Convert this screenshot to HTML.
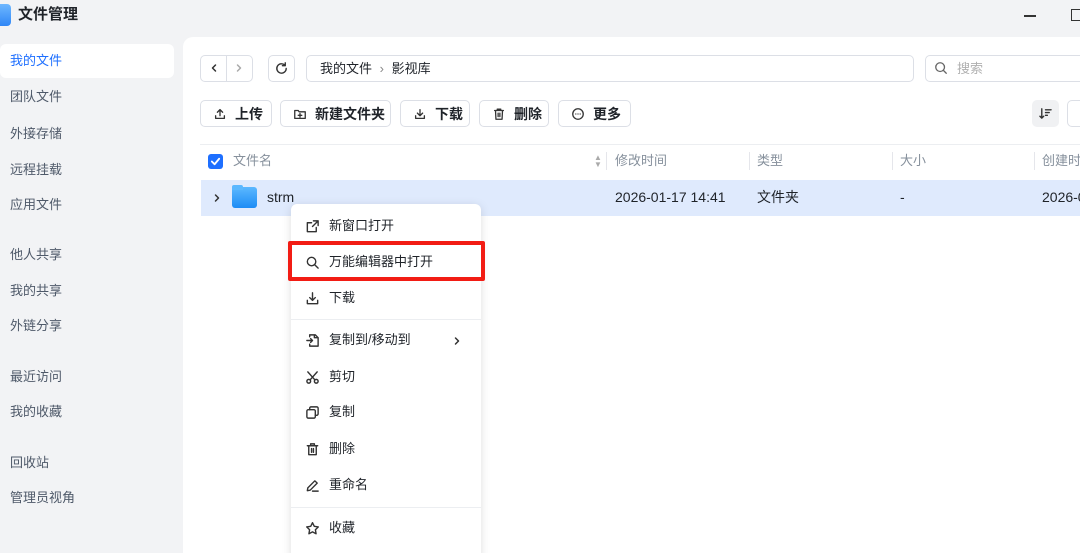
<!DOCTYPE html>
<html><head><meta charset="utf-8"><style>
*{box-sizing:border-box;margin:0;padding:0}
html,body{width:1080px;height:553px;overflow:hidden}
body{background:#f2f3f5;font-family:"Liberation Sans","Noto Sans CJK SC",sans-serif;color:#1f2329;position:relative;white-space:nowrap}
.abs{position:absolute}
.nav{position:absolute;left:10px;font-size:13px;color:#4e5969;line-height:16px}
.btn{position:absolute;height:27px;border:1px solid #dcdfe6;border-radius:5px;background:#fff;font-size:14px;font-weight:bold;display:flex;align-items:center;padding-left:12px;gap:8px;color:#1f2329}
.btn svg{width:14px;height:14px}
.mi{position:absolute;left:305px;font-size:13px;display:flex;align-items:center;gap:9px;color:#1f2329;line-height:16px}
.mi svg{width:15px;height:15px}
svg{fill:none;stroke:#333;stroke-width:1.5;stroke-linecap:round;stroke-linejoin:round}
.hd{position:absolute;top:153px;font-size:13px;color:#86909c;line-height:16px}
.sep{position:absolute;top:152px;width:1px;height:18px;background:#e5e6eb}
.cell{position:absolute;top:189px;font-size:14px;line-height:17px}
</style></head><body>
<div class="abs" style="left:-6px;top:4px;width:17px;height:22px;border-radius:4px;background:linear-gradient(#6fb8ff,#2f86f6)"></div>
<div class="abs" style="left:18px;top:6px;font-size:15px;font-weight:bold;line-height:18px">文件管理</div>
<div class="abs" style="left:1024px;top:15px;width:12px;height:1.5px;background:#333"></div>
<div class="abs" style="left:1071px;top:9px;width:12px;height:12px;border:1.5px solid #333"></div>

<div class="abs" style="left:0;top:44px;width:174px;height:34px;background:#fff;border-radius:6px"></div>
<div class="nav" style="top:53px;color:#1e6fff">我的文件</div>
<div class="nav" style="top:89px">团队文件</div>
<div class="nav" style="top:126px">外接存储</div>
<div class="nav" style="top:162px">远程挂载</div>
<div class="nav" style="top:197px">应用文件</div>
<div class="nav" style="top:247px">他人共享</div>
<div class="nav" style="top:283px">我的共享</div>
<div class="nav" style="top:318px">外链分享</div>
<div class="nav" style="top:369px">最近访问</div>
<div class="nav" style="top:404px">我的收藏</div>
<div class="nav" style="top:455px">回收站</div>
<div class="nav" style="top:490px">管理员视角</div>

<div class="abs" style="left:183px;top:37px;width:897px;height:516px;background:#fff;border-radius:10px 0 0 0"></div>

<div class="abs" style="left:200px;top:55px;width:53px;height:27px;border:1px solid #dcdfe6;border-radius:5px"></div>
<div class="abs" style="left:226px;top:55px;width:1px;height:27px;background:#dcdfe6"></div>
<svg class="abs" style="left:209px;top:63px;width:10px;height:10px" viewBox="0 0 10 10"><path d="M6.5 2L3.5 5l3 3"/></svg>
<svg class="abs" style="left:234px;top:63px;width:10px;height:10px;stroke:#aaa" viewBox="0 0 10 10"><path d="M3.5 2l3 3-3 3"/></svg>
<div class="abs" style="left:268px;top:55px;width:27px;height:27px;border:1px solid #dcdfe6;border-radius:5px"></div>
<svg class="abs" style="left:274px;top:61px;width:15px;height:15px" viewBox="0 0 16 16"><path d="M13 8a5 5 0 1 1-1.5-3.6M12 2v3H9"/></svg>
<div class="abs" style="left:306px;top:55px;width:608px;height:27px;border:1px solid #dcdfe6;border-radius:5px;font-size:13px;line-height:16px;padding:5px 13px">我的文件 <span style="color:#888;margin:0 4px">›</span> 影视库</div>
<div class="abs" style="left:925px;top:55px;width:170px;height:27px;border:1px solid #dcdfe6;border-radius:5px;font-size:13px;line-height:16px;color:#b0b0b0;padding:5px 0 0 31px">搜索</div>
<svg class="abs" style="left:934px;top:61px;width:14px;height:14px;stroke:#666" viewBox="0 0 16 16"><circle cx="7" cy="7" r="5"/><path d="M11 11l3 3"/></svg>

<div class="btn" style="left:200px;top:100px;width:72px"><svg viewBox="0 0 16 16"><path d="M8 10V3M5 6l3-3 3 3M3 10v3h10v-3"/></svg>上传</div>
<div class="btn" style="left:280px;top:100px;width:111px"><svg viewBox="0 0 16 16"><path d="M2 4h4l1 1.5h7V13H2zM8 7.5v4M6 9.5h4"/></svg>新建文件夹</div>
<div class="btn" style="left:400px;top:100px;width:70px"><svg viewBox="0 0 16 16"><path d="M8 3v7M5 7l3 3 3-3M3 10v3h10v-3"/></svg>下载</div>
<div class="btn" style="left:479px;top:100px;width:70px"><svg viewBox="0 0 16 16"><path d="M3 4h10M6 4V2.5h4V4M4 4l.5 10h7L12 4M7 7v4M9 7v4"/></svg>删除</div>
<div class="btn" style="left:558px;top:100px;width:73px"><svg viewBox="0 0 16 16"><circle cx="8" cy="8" r="6"/><path d="M5.5 8h.01M8 8h.01M10.5 8h.01"/></svg>更多</div>
<div class="abs" style="left:1032px;top:100px;width:27px;height:27px;background:#f0f1f3;border-radius:5px"></div>
<svg class="abs" style="left:1039px;top:107px;width:13px;height:13px" viewBox="0 0 14 14"><path d="M3 2v10M1 10l2 2 2-2M7 3h6M7 6h4M7 9h2"/></svg>
<div class="abs" style="left:1067px;top:100px;width:27px;height:27px;border:1px solid #dcdfe6;border-radius:5px"></div>

<div class="abs" style="left:200px;top:144px;width:900px;height:1px;background:#eceef1"></div>
<div class="abs" style="left:208px;top:154px;width:15px;height:15px;background:#1e6fff;border-radius:3px"></div>
<svg class="abs" style="left:210px;top:156px;width:11px;height:11px;stroke:#fff;stroke-width:2" viewBox="0 0 12 12"><path d="M2 6l3 3 5-6"/></svg>
<div class="hd" style="left:233px">文件名</div>
<div class="abs" style="left:594px;top:154px;font-size:8px;color:#aaa;line-height:7px">▲<br>▼</div>
<div class="sep" style="left:606px"></div><div class="hd" style="left:615px">修改时间</div>
<div class="sep" style="left:749px"></div><div class="hd" style="left:757px">类型</div>
<div class="sep" style="left:892px"></div><div class="hd" style="left:900px">大小</div>
<div class="sep" style="left:1034px"></div><div class="hd" style="left:1042px">创建时间</div>

<div class="abs" style="left:201px;top:180px;width:900px;height:36px;background:#dfeafd"></div>
<svg class="abs" style="left:212px;top:193px;width:10px;height:10px" viewBox="0 0 10 10"><path d="M3.5 2l3 3-3 3"/></svg>
<div class="abs" style="left:232px;top:187px;width:25px;height:21px;border-radius:3px;background:linear-gradient(#5bb8ff,#1d8cf5)"></div>
<div class="abs" style="left:232px;top:185px;width:11px;height:5px;border-radius:2px 2px 0 0;background:#5bb8ff"></div>
<div class="cell" style="left:267px">strm</div>
<div class="cell" style="left:615px">2026-01-17 14:41</div>
<div class="cell" style="left:757px">文件夹</div>
<div class="cell" style="left:900px">-</div>
<div class="cell" style="left:1042px">2026-01</div>

<div class="abs" style="left:291px;top:204px;width:190px;height:360px;background:#fff;border-radius:6px;box-shadow:0 2px 10px rgba(0,0,0,.13)"></div>
<div class="abs" style="left:291px;top:319px;width:190px;height:1px;background:#eceef1"></div>
<div class="abs" style="left:291px;top:507px;width:190px;height:1px;background:#eceef1"></div>
<div class="mi" style="top:218px"><svg viewBox="0 0 16 16"><path d="M9 2h5v5M14 2L8 8M12 9v4.5H2.5V4H7"/></svg>新窗口打开</div>
<div class="mi" style="top:254px"><svg viewBox="0 0 16 16"><circle cx="7" cy="7" r="4.5"/><path d="M10.5 10.5L14 14"/></svg>万能编辑器中打开</div>
<div class="mi" style="top:290px"><svg viewBox="0 0 16 16"><path d="M8 2v8M5 7l3 3 3-3M2.5 10v3.5h11V10"/></svg>下载</div>
<div class="mi" style="top:332px"><svg viewBox="0 0 16 16"><path d="M5 4V2h6l3 3v9H5v-2M10 2v3h4M2 8h6M6 6l2 2-2 2"/></svg>复制到/移动到</div>
<svg class="abs" style="left:452px;top:336px;width:10px;height:10px" viewBox="0 0 10 10"><path d="M3.5 2l3 3-3 3"/></svg>
<div class="mi" style="top:369px"><svg viewBox="0 0 16 16"><circle cx="4" cy="12" r="2"/><circle cx="12" cy="12" r="2"/><path d="M5.5 10.5L13 2M10.5 10.5L3 2"/></svg>剪切</div>
<div class="mi" style="top:404px"><svg viewBox="0 0 16 16"><rect x="2" y="5" width="9" height="9" rx="1.5"/><path d="M5 5V3.5A1.5 1.5 0 0 1 6.5 2H12.5A1.5 1.5 0 0 1 14 3.5V9.5A1.5 1.5 0 0 1 12.5 11H11"/></svg>复制</div>
<div class="mi" style="top:441px"><svg viewBox="0 0 16 16"><path d="M2.5 4h11M6 4V2h4v2M4 4v9.5h8V4M7 7v4M9 7v4"/></svg>删除</div>
<div class="mi" style="top:477px"><svg viewBox="0 0 16 16"><path d="M2.5 13.5l.5-3L10.5 3l2.5 2.5-7.5 7.5zM8 14h6"/></svg>重命名</div>
<div class="mi" style="top:520px"><svg viewBox="0 0 16 16"><path d="M8 1.8l1.9 3.9 4.3.6-3.1 3 .7 4.3L8 11.6l-3.8 2 .7-4.3-3.1-3 4.3-.6z"/></svg>收藏</div>

<div class="abs" style="left:288px;top:241px;width:197px;height:40px;border:4px solid #f21c14;border-radius:2px"></div>
</body></html>
